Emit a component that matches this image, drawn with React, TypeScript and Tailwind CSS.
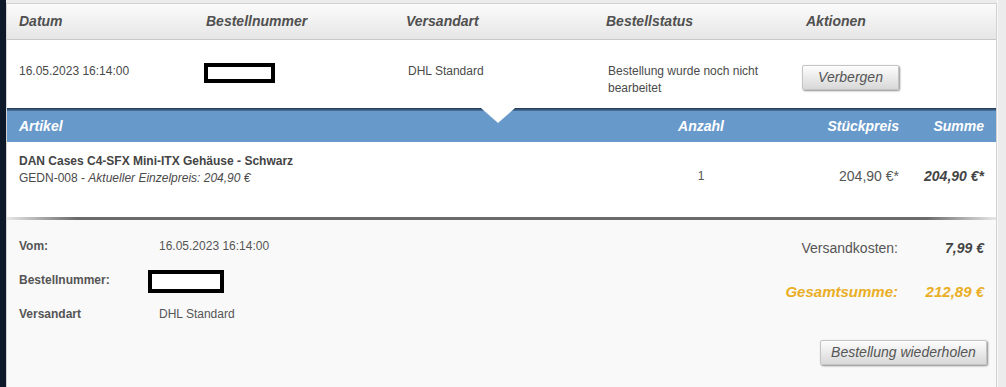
import React from "react";

const font = "font-['Liberation_Sans',Arial,sans-serif]";

function Redacted({ className = "" }: { className?: string }) {
  return <div className={`h-[20px] w-[71px] border-[4px] border-black bg-white ${className}`} />;
}

function GrayButton({ label, className = "" }: { label: string; className?: string }) {
  return (
    <button
      className={`h-[25px] rounded-[2px] border border-[#c4c4c4] bg-gradient-to-b from-[#fdfdfd] to-[#d8d8d8] text-[14px] italic text-[#555] shadow-[1px_1px_2px_rgba(0,0,0,0.45)] ${className}`}
    >
      {label}
    </button>
  );
}

export default function App() {
  return (
    <div className={`flex h-[387px] w-[1006px] overflow-hidden bg-[#ececec] ${font}`}>
      <div className="w-[6px] shrink-0 bg-[#0d1828]" />
      <div className="flex w-[991px] shrink-0 flex-col pt-[3px]">
        <div className="flex flex-1 flex-col border-x border-t border-[#d2d2d2] bg-white">
          {/* order header */}
          <div className="grid h-[36px] shrink-0 grid-cols-[187px_200px_200px_200px_1fr] items-center border-b border-[#c8c8c8] bg-gradient-to-b from-[#fbfbfb] to-[#e6e6e6] pl-[12px] text-[14px] font-bold italic text-[#505050]">
            <div>Datum</div>
            <div>Bestellnummer</div>
            <div>Versandart</div>
            <div>Bestellstatus</div>
            <div>Aktionen</div>
          </div>

          {/* order row */}
          <div className="grid h-[68px] shrink-0 grid-cols-[187px_200px_200px_200px_1fr] pl-[12px] pt-[23px] text-[12px] leading-[17px] text-[#4a4a4a]">
            <div>16.05.2023 16:14:00</div>
            <div>
              <Redacted className="-ml-[2px]" />
            </div>
            <div className="pl-[2px]">DHL Standard</div>
            <div className="pl-[2px]">
              Bestellung wurde noch nicht
              <br />
              bearbeitet
            </div>
            <div className="pt-[2px]">
              <GrayButton label="Verbergen" className="-ml-[4px] w-[97px]" />
            </div>
          </div>

          {/* article header band */}
          <div className="relative shrink-0">
            <div className="h-[3px] bg-gradient-to-b from-[#1e3550] to-[#4f7aa6]" />
            <div className="grid h-[31px] grid-cols-[1fr_100px_148px_85px] items-center bg-[#6799ca] px-[12px] text-[14px] font-bold italic text-white">
              <div>Artikel</div>
              <div className="text-center">Anzahl</div>
              <div className="text-right">Stückpreis</div>
              <div className="text-right">Summe</div>
            </div>
            <svg className="absolute left-[474px] top-0" width="34" height="15" viewBox="0 0 34 15">
              <polygon points="0,0 34,0 17,15" fill="#ffffff" />
            </svg>
          </div>

          {/* article row */}
          <div className="grid h-[75px] shrink-0 grid-cols-[1fr_100px_148px_85px] px-[12px] text-[12px] leading-[17px] text-[#4a4a4a]">
            <div className="pt-[11px]">
              <div className="font-bold text-[#444]">DAN Cases C4-SFX Mini-ITX Gehäuse - Schwarz</div>
              <div>
                GEDN-008 - <span className="italic">Aktueller Einzelpreis: 204,90 €</span>
              </div>
            </div>
            <div className="pt-[26px] text-center text-[#555]">1</div>
            <div className="pt-[26px] text-right text-[14px] text-[#555]">204,90 €*</div>
            <div className="pt-[26px] text-right text-[14px] font-bold italic text-[#444]">204,90 €*</div>
          </div>

          <div className="h-[3px] shrink-0 bg-[linear-gradient(to_right,#e8e8e8,#6b6b6b_7%,#6b6b6b_93%,#e8e8e8)]" />

          {/* summary */}
          <div className="flex flex-1 justify-between bg-[#f9f9f9] px-[12px]">
            <div className="grid grid-cols-[140px_1fr] grid-rows-[17px_17px_17px] content-start gap-y-[17px] pt-[18px] text-[12px] leading-[17px] text-[#555]">
              <div className="font-bold">Vom:</div>
              <div>16.05.2023 16:14:00</div>
              <div className="font-bold">Bestellnummer:</div>
              <div className="-mt-[2px]">
                <Redacted className="-ml-[11px] h-[23px] w-[76px]" />
              </div>
              <div className="font-bold">Versandart</div>
              <div>DHL Standard</div>
            </div>
            <div className="flex flex-col items-end pt-[18px]">
              <div className="grid grid-cols-[auto_86px] items-center gap-y-[22px]">
                <div className="text-right text-[14px] text-[#555]">Versandkosten:</div>
                <div className="text-right text-[14px] font-bold italic text-[#444]">7,99 €</div>
                <div className="text-right text-[15px] font-bold italic text-[#eaae25]">Gesamtsumme:</div>
                <div className="text-right text-[15px] font-bold italic text-[#eaae25]">212,89 €</div>
              </div>
              <GrayButton label="Bestellung wiederholen" className="-mr-[3px] mt-[36px] w-[167px]" />
            </div>
          </div>
        </div>
      </div>
      <div className="w-[9px] shrink-0 border-l border-[#f8f8f8] bg-[#ececec]" />
    </div>
  );
}
